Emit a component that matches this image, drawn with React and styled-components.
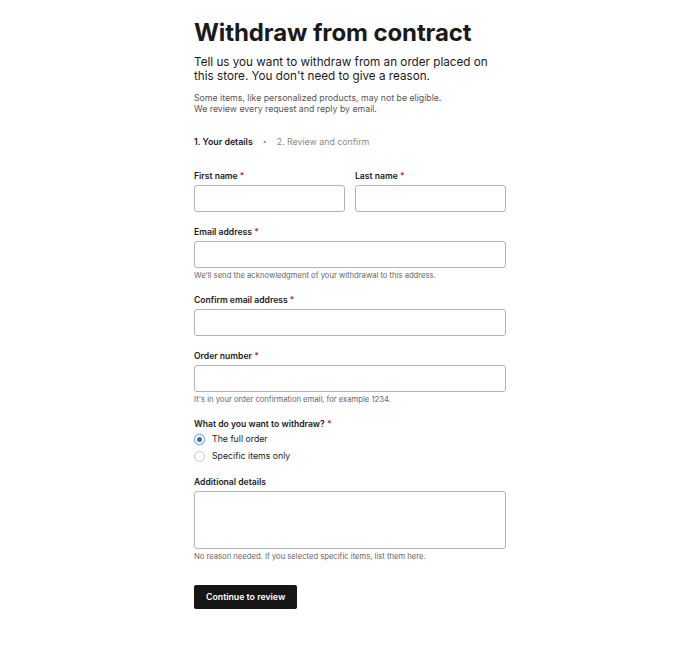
import React, { useState } from "react";
import styled, { createGlobalStyle } from "styled-components";

const Global = createGlobalStyle`
  * { box-sizing: border-box; }
  body {
    margin: 0;
    background: #fff;
    font-family: Inter, "Noto Sans", sans-serif;
    color: #1a1a1a;
  }
`;

const Page = styled.main`
  width: 312px;
  margin: 0 auto;
  padding: 18px 0 40px;
`;

const Title = styled.h1`
  margin: 0;
  font-size: 24px;
  line-height: 30px;
  font-weight: 700;
  letter-spacing: -0.1px;
  color: #1a1a1a;
`;

const Lead = styled.p`
  margin: 7px 0 0;
  font-size: 11.7px;
  line-height: 14px;
  color: #1a1a1a;
`;

const Note = styled.p`
  margin: 10px 0 0;
  font-size: 8.75px;
  line-height: 11px;
  color: #555;
`;

const Steps = styled.ol`
  list-style: none;
  margin: 20px 0 0;
  padding: 0;
  display: flex;
  align-items: center;
  gap: 10px;
  font-size: 8.8px;
  line-height: 14px;
`;

const Step = styled.li`
  font-weight: ${p => (p.$active ? 600 : 400)};
  color: ${p => (p.$active ? "#1a1a1a" : "#8a8a8a")};
`;

const Sep = styled.li`
  color: #999;
  font-size: 7px;
`;

const Form = styled.form`
  margin-top: 21px;
  display: flex;
  flex-direction: column;
  gap: 13.5px;
`;

const Row = styled.div`
  display: grid;
  grid-template-columns: minmax(0, 1fr) minmax(0, 1fr);
  gap: 10px;
`;

const Field = styled.div`
  display: flex;
  flex-direction: column;
  min-width: 0;
`;

const Label = styled.label`
  font-size: 8.6px;
  line-height: 12px;
  font-weight: 600;
  color: #1a1a1a;
  margin-bottom: 3px;
`;

const Req = styled.span`
  color: #c0282d;
`;

const Input = styled.input`
  width: 100%;
  height: 27px;
  border: 1px solid #b3b3b3;
  border-radius: 3px;
  padding: 0 8px;
  font: inherit;
  font-size: 10px;
  background: #fff;
`;

const Area = styled.textarea`
  width: 100%;
  height: 58px;
  border: 1px solid #b3b3b3;
  border-radius: 3px;
  padding: 6px 8px;
  font: inherit;
  font-size: 10px;
  resize: none;
  display: block;
`;

const Hint = styled.p`
  margin: 3px 0 0;
  font-size: 7.65px;
  line-height: 10px;
  color: #666;
`;

const Radios = styled.div`
  display: flex;
  flex-direction: column;
  gap: 5px;
`;

const RadioRow = styled.label`
  display: flex;
  align-items: center;
  gap: 7px;
  height: 12px;
  font-size: 8.75px;
  color: #1a1a1a;
  cursor: pointer;
`;

const Dot = styled.span`
  width: 11px;
  height: 11px;
  border-radius: 50%;
  border: 1px solid ${p => (p.$on ? "#6f9bd0" : "#c4c4c4")};
  box-shadow: ${p => (p.$on ? "0 0 0 1px rgba(42,111,184,0.15)" : "none")};
  display: flex;
  align-items: center;
  justify-content: center;
  &::after {
    content: "";
    width: 5px;
    height: 5px;
    border-radius: 50%;
    background: ${p => (p.$on ? "#2a6fb8" : "transparent")};
  }
`;

const Hidden = styled.input`
  display: none;
`;

const Button = styled.button`
  align-self: flex-start;
  margin-top: 10px;
  height: 24px;
  padding: 0 12px;
  background: #161616;
  color: #fff;
  border: none;
  border-radius: 2px;
  font: inherit;
  font-size: 8.75px;
  font-weight: 600;
  cursor: pointer;
`;

const Star = () => <Req>*</Req>;

export default function App() {
  const [scope, setScope] = useState("full");
  const options = [
    { id: "full", text: "The full order" },
    { id: "items", text: "Specific items only" },
  ];
  return (
    <>
      <Global />
      <Page>
        <Title>Withdraw from contract</Title>
        <Lead>
          Tell us you want to withdraw from an order placed on this store. You
          don't need to give a reason.
        </Lead>
        <Note>
          Some items, like personalized products, may not be eligible.
          <br />
          We review every request and reply by email.
        </Note>
        <Steps>
          <Step $active>1. Your details</Step>
          <Sep>•</Sep>
          <Step>2. Review and confirm</Step>
        </Steps>
        <Form onSubmit={e => e.preventDefault()}>
          <Row>
            <Field>
              <Label>First name <Star /></Label>
              <Input />
            </Field>
            <Field>
              <Label>Last name <Star /></Label>
              <Input />
            </Field>
          </Row>
          <Field>
            <Label>Email address <Star /></Label>
            <Input type="email" />
            <Hint>We'll send the acknowledgment of your withdrawal to this address.</Hint>
          </Field>
          <Field>
            <Label>Confirm email address <Star /></Label>
            <Input type="email" />
          </Field>
          <Field>
            <Label>Order number <Star /></Label>
            <Input />
            <Hint>It's in your order confirmation email, for example 1234.</Hint>
          </Field>
          <Field>
            <Label>What do you want to withdraw? <Star /></Label>
            <Radios>
              {options.map(o => (
                <RadioRow key={o.id}>
                  <Hidden
                    type="radio"
                    name="scope"
                    checked={scope === o.id}
                    onChange={() => setScope(o.id)}
                  />
                  <Dot $on={scope === o.id} />
                  {o.text}
                </RadioRow>
              ))}
            </Radios>
          </Field>
          <Field>
            <Label>Additional details</Label>
            <Area />
            <Hint>No reason needed. If you selected specific items, list them here.</Hint>
          </Field>
          <Button type="submit">Continue to review</Button>
        </Form>
      </Page>
    </>
  );
}
